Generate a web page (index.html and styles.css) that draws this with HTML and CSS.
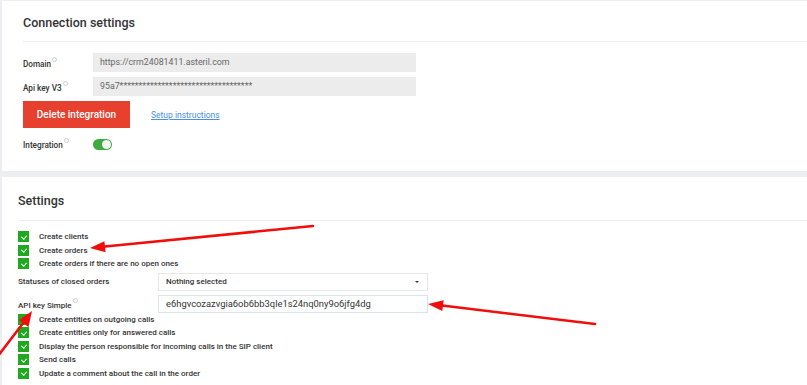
FILE: index.html
```html
<!DOCTYPE html>
<html>
<head>
<meta charset="utf-8">
<link rel="stylesheet" href="styles.css">
</head>
<body>
<div class="page">
  <section class="card card-conn">
    <div class="card-head"><h2 class="title">Connection settings</h2></div>
    <div class="card-body">
      <div class="frow">
        <div class="flabel">Domain<span class="info"></span></div>
        <div class="finput ro">https://crm24081411.asteril.com</div>
      </div>
      <div class="frow">
        <div class="flabel">Api key V3<span class="info"></span></div>
        <div class="finput ro">95a7***********************************</div>
      </div>
      <div class="actions">
        <button class="btn-del">Delete integration</button>
        <a class="link" href="#">Setup instructions</a>
      </div>
      <div class="frow trow">
        <div class="flabel">Integration<span class="info"></span></div>
        <div class="toggle"><span class="knob"></span></div>
      </div>
    </div>
  </section>

  <section class="card card-set">
    <div class="card-head"><h2 class="title">Settings</h2></div>
    <div class="card-body">
      <div class="chk"><span class="box"></span>Create clients</div>
      <div class="chk"><span class="box"></span>Create orders</div>
      <div class="chk"><span class="box"></span>Create orders if there are no open ones</div>
      <div class="srow sel-row">
        <div class="slabel">Statuses of closed orders</div>
        <div class="select">Nothing selected<span class="caret"></span></div>
      </div>
      <div class="srow key-row">
        <div class="slabel">API key Simple<span class="info"></span></div>
        <div class="sinput">e6hgvcozazvgia6ob6bb3qle1s24nq0ny9o6jfg4dg</div>
      </div>
      <div class="chk"><span class="box"></span>Create entities on outgoing calls</div>
      <div class="chk"><span class="box"></span>Create entities only for answered calls</div>
      <div class="chk"><span class="box"></span>Display the person responsible for incoming calls in the SIP client</div>
      <div class="chk"><span class="box"></span>Send calls</div>
      <div class="chk"><span class="box"></span>Update a comment about the call in the order</div>
    </div>
  </section>

  <svg class="arrows" width="807" height="385" viewBox="0 0 807 385">
    <g stroke="#f20d0d" stroke-width="2.6" stroke-linecap="round" fill="none">
      <line x1="313" y1="226" x2="100" y2="247"/>
      <line x1="595" y1="324" x2="438" y2="305"/>
      <line x1="-2" y1="356" x2="27" y2="318"/>
    </g>
    <g fill="#f20d0d">
      <polygon points="90,248 105.6,252.2 104.4,241.2"/>
      <polygon points="428,304 442.3,311 443.7,300.2"/>
      <polygon points="32,311 28.5,327 19,320"/>
    </g>
  </svg>
</div>
</body>
</html>
```

FILE: styles.css
```css
* { box-sizing: border-box; }
html, body { margin: 0; padding: 0; }
body {
  background: #eceef2;
  font-family: Roboto, "Liberation Sans", sans-serif;
  color: #333;
  width: 807px;
  height: 385px;
  overflow: hidden;
}
.page {
  position: relative;
  padding-left: 2px;
  padding-top: 1px;
}
.card {
  background: #fff;
}
.card-conn {
  height: 170px;
}
.card-conn .card-head {
  margin-left: 21px;
  padding: 14px 0 10px;
  border-bottom: 1px solid #eeeeee;
}
.title {
  margin: 0;
  font-size: 12.5px;
  line-height: 16px;
  font-weight: 500;
  color: #333;
}
.card-conn .card-body {
  padding: 11px 0 0 21px;
}
.frow {
  display: flex;
  align-items: center;
  height: 19px;
  margin-bottom: 5px;
}
.flabel {
  width: 70px;
  font-size: 8.2px;
  font-weight: 500;
  color: #333;
}
.info {
  display: inline-block;
  width: 5px;
  height: 5px;
  border: 1px solid #cfcfcf;
  border-radius: 50%;
  vertical-align: 5px;
  margin-left: 1px;
}
.finput {
  width: 323px;
  height: 19px;
  line-height: 19px;
  padding-left: 7px;
  font-size: 8.8px;
  color: #666;
}
.ro {
  background: #ececec;
  border-radius: 1px;
}
.actions {
  display: flex;
  align-items: center;
  margin-top: 3px;
}
.btn-del {
  width: 107px;
  height: 27px;
  border: 0;
  background: #e8402e;
  color: #fff;
  font-family: inherit;
  font-size: 10px;
  font-weight: 500;
  padding: 0;
}
.link {
  margin-left: 21px;
  font-size: 8.5px;
  color: #4a8fe0;
  text-decoration: underline;
}
.trow {
  margin-top: 9px;
  height: 14px;
}
.toggle {
  position: relative;
  width: 19px;
  height: 11px;
  border-radius: 6px;
  background: #3dab3d;
}
.knob {
  position: absolute;
  right: 1px;
  top: 1px;
  width: 9px;
  height: 9px;
  border-radius: 50%;
  background: #f4f4f4;
}

.card-set {
  margin-top: 6px;
  height: 210px;
}
.card-set .card-head {
  margin-left: 16px;
  padding: 16px 0 11px;
  border-bottom: 1px solid #eeeeee;
}
.card-set .card-body {
  padding: 9px 0 0 16px;
}
.chk {
  display: flex;
  align-items: center;
  height: 13.5px;
  font-size: 8px;
  font-weight: 500;
  color: #333;
}
.box {
  position: relative;
  width: 11px;
  height: 11px;
  background: #21a821;
  margin-right: 10px;
  flex: none;
}
.box::after {
  content: "";
  position: absolute;
  left: 3.5px;
  top: 2.5px;
  width: 2.5px;
  height: 4px;
  border: solid #fff;
  border-width: 0 1.5px 1.5px 0;
  transform: rotate(40deg);
}
.srow {
  display: flex;
  align-items: center;
}
.sel-row { margin-top: 2px; }
.key-row { margin-top: 4px; }
.slabel {
  width: 140px;
  font-size: 8px;
  font-weight: 500;
  color: #333;
}
.select, .sinput {
  position: relative;
  width: 270px;
  height: 18px;
  line-height: 16px;
  border: 1px solid #e6e6e6;
  padding-left: 7px;
  font-size: 8px;
  color: #333;
  background: #fff;
}
.select { font-weight: 500; }
.sinput {
  font-size: 9.4px;
  border-color: #dde3ea;
}
.caret {
  position: absolute;
  right: 8px;
  top: 7px;
  border-left: 2px solid transparent;
  border-right: 2px solid transparent;
  border-top: 2px solid #333;
}
.arrows {
  position: absolute;
  left: 0;
  top: 0;
  pointer-events: none;
}
```
